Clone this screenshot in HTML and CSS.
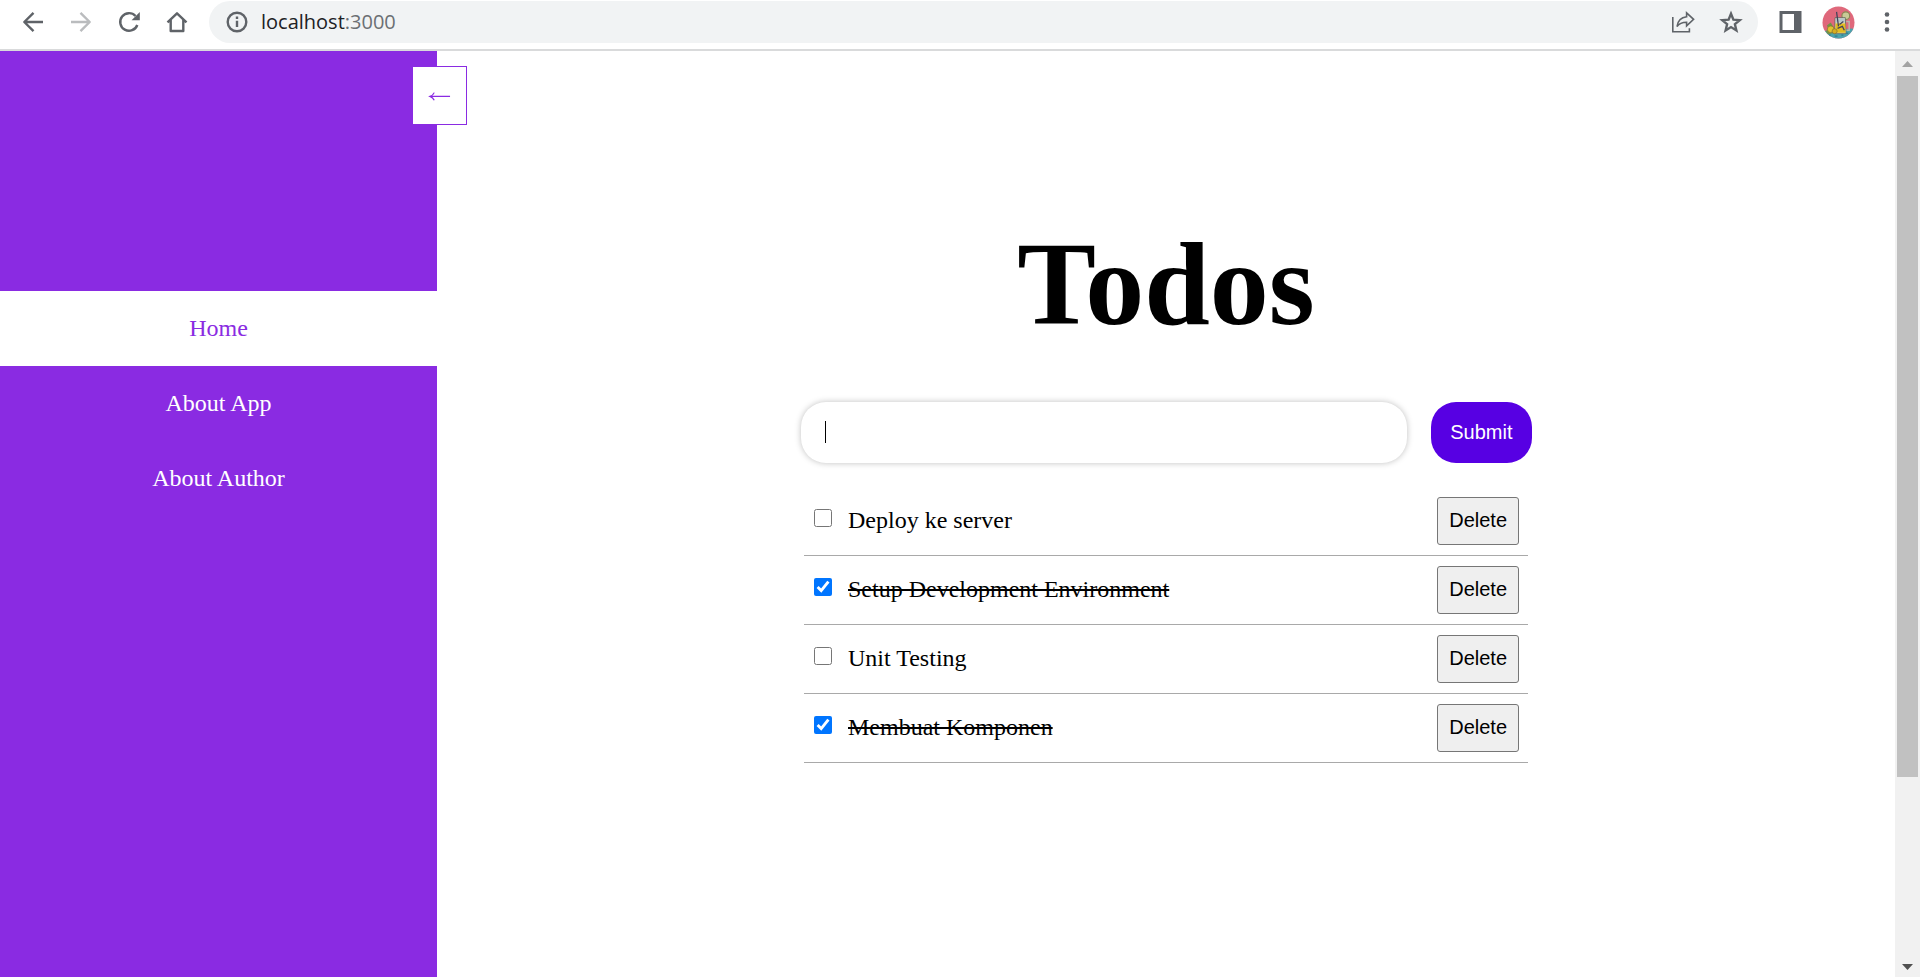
FILE: index.html
```html
<!DOCTYPE html>
<html lang="id">
<head>
<meta charset="utf-8">
<title>Todos</title>
<link rel="stylesheet" href="styles.css">
</head>
<body>
<header class="toolbar">
  <div class="nav-buttons">
    <button class="icon-btn" type="button" aria-label="Back">
      <svg viewBox="0 0 24 24" class="icon"><path d="M22 12H3.500M12.500 2.800L3.300 12l9.200 9.200" /></svg>
    </button>
    <button class="icon-btn icon-btn-dim" type="button" aria-label="Forward">
      <svg viewBox="0 0 24 24" class="icon"><path d="M2 12h18.500M11.500 2.800l9.200 9.200-9.200 9.200" /></svg>
    </button>
    <button class="icon-btn" type="button" aria-label="Reload">
      <svg viewBox="0 0 24 24" class="icon"><path d="M20.300 15A8.800 8.800 0 1 1 18.500 6" /><path class="fill" d="M22.800 2v8.200h-8.200z" /></svg>
    </button>
    <button class="icon-btn" type="button" aria-label="Home">
      <svg viewBox="0 0 24 24" class="icon"><path d="M2.500 12.300L12 3.300l9.500 9M5.700 10v11h12.600V10" /></svg>
    </button>
  </div>
  <div class="omnibox">
    <svg viewBox="0 0 24 24" class="icon icon-info"><circle cx="12" cy="12" r="9.300" /><path d="M12 10.800v6.200M12 6.600v2.300" /></svg>
    <div class="url" role="textbox" aria-label="Address">localhost<span class="url-port">:3000</span></div>
    <button class="icon-btn" type="button" aria-label="Share">
      <svg viewBox="0 0 24 24" class="icon icon-thin"><path d="M1.800 7v14.700h16.600v-3.500M15.600 2.800l7 6.500-7 6.500v-3.600c-4.600 0-7.600 1.400-9.600 4.300.7-5.200 3.600-9 9.600-9.700z" /></svg>
    </button>
    <button class="icon-btn" type="button" aria-label="Bookmark">
      <svg viewBox="0 0 24 24" class="icon"><path class="mitre" d="M12 3.700l2.400 5.900 6.400.5-4.900 4.100 1.500 6.200L12 17.100l-5.400 3.300 1.500-6.200-4.900-4.100 6.400-.5z" /></svg>
    </button>
  </div>
  <button class="icon-btn" type="button" aria-label="Side panel">
    <svg viewBox="0 0 24 24" class="icon"><path class="fill" fill-rule="evenodd" d="M1.500 1h22v22h-22zM4.500 4v16H16V4z" /></svg>
  </button>
  <button class="avatar" type="button" aria-label="Profile">
    <svg viewBox="0 0 34 34" class="avatar-art">
      <defs><clipPath id="round"><circle cx="17" cy="17" r="16.500" /></clipPath></defs>
      <g clip-path="url(#round)">
        <path fill="#df687b" d="M0 0h34v34H0z" />
        <path fill="#4aa4ae" d="M0 27q5-3 10-1t12-1 12-1v10H0z" />
        <circle cx="24.500" cy="10" r="4" fill="#c9ca96" stroke="#8b8554" stroke-width="1.200" />
        <path d="M25 16h3v9h-3" fill="none" stroke="#b9b9a8" stroke-width="1.500" />
        <path fill="#ded9b8" stroke="#59635c" stroke-width=".8" d="M13.500 12h10.500l.7 16.500H13z" />
        <path fill="#e2bc20" d="M14 18h10l.3 9.500H13.700z" />
        <path fill="#b7c6c9" d="M14 12.500h9.500V17H14z" />
        <path d="M15 6l2 15M18 19l4-3M16 23l5-2 2 4" fill="none" stroke="#41445a" stroke-width="1.300" />
        <path fill="#729548" d="M5 20l4-3 3 5-5 2zM4 26l3-3 4 5-5 1z" />
        <circle cx="9" cy="24" r="3.500" fill="#e0c22f" stroke="#806f38" stroke-width=".7" />
        <circle cx="13" cy="26" r="2.600" fill="#d6ad20" stroke="#806f38" stroke-width=".7" />
        <path d="M7 30h2M13 31h3M20 30h2M25 28h2" stroke="#296f80" />
      </g>
    </svg>
  </button>
  <button class="icon-btn" type="button" aria-label="Menu">
    <svg viewBox="0 0 24 24" class="icon"><g class="fill"><circle cx="12" cy="4.500" r="2.300" /><circle cx="12" cy="12" r="2.300" /><circle cx="12" cy="19.500" r="2.300" /></g></svg>
  </button>
</header>
<div class="page">
  <aside class="sidebar">
    <button class="toggle" type="button" aria-label="Close sidebar">
      <svg viewBox="0 0 24 27" class="toggle-arrow"><path d="M2 14.500h21M6.500 10.500q-1.200 2.800-4.500 4 3.300 1.200 4.500 4" /></svg>
    </button>
    <nav class="menu">
      <a class="menu-link menu-link-active" href="#home">Home</a>
      <a class="menu-link" href="#app">About App</a>
      <a class="menu-link" href="#author">About Author</a>
    </nav>
  </aside>
  <main class="content">
    <h1 class="title">Todos</h1>
    <form class="todo-form">
      <div class="field">
        <input class="field-input" type="text" aria-label="New todo">
        <span class="caret"></span>
      </div>
      <button class="submit" type="submit">Submit</button>
    </form>
    <ul class="todos">
      <li class="todo">
        <input class="check" type="checkbox" id="t1">
        <label class="todo-label" for="t1">Deploy ke server</label>
        <button class="delete" type="button">Delete</button>
      </li>
      <li class="todo">
        <input class="check" type="checkbox" id="t2" checked>
        <label class="todo-label" for="t2">Setup Development Environment</label>
        <button class="delete" type="button">Delete</button>
      </li>
      <li class="todo">
        <input class="check" type="checkbox" id="t3">
        <label class="todo-label" for="t3">Unit Testing</label>
        <button class="delete" type="button">Delete</button>
      </li>
      <li class="todo">
        <input class="check" type="checkbox" id="t4" checked>
        <label class="todo-label" for="t4">Membuat Komponen</label>
        <button class="delete" type="button">Delete</button>
      </li>
    </ul>
  </main>
  <div class="scrollbar" aria-hidden="true">
    <svg class="scroll-arrow scroll-arrow-off" viewBox="0 0 25 25"><path d="M7 16h11l-5.500-6z" /></svg>
    <div class="track"><div class="thumb"></div></div>
    <svg class="scroll-arrow" viewBox="0 0 25 25"><path d="M7 12h11l-5.500 6z" /></svg>
  </div>
</div>
</body>
</html>
```
FILE: styles.css
```css
* {
  box-sizing: border-box;
}

body {
  margin: 0;
  min-height: 100vh;
  display: flex;
  flex-direction: column;
  background: #fff;
  color: #000;
  font-family: "Liberation Serif", "Times New Roman", serif;
  font-size: 24px;
}

button {
  font: inherit;
  cursor: pointer;
}

/* Browser toolbar */
.toolbar {
  display: flex;
  align-items: center;
  gap: 20px;
  padding: 1px 21px 6px;
  border-bottom: 2px solid #d9dadb;
}

.nav-buttons {
  display: flex;
  gap: 24px;
}

.icon-btn {
  display: flex;
  padding: 0;
  border: 0;
  background: none;
  color: #5f6368;
}

.icon-btn-dim {
  color: #babcbe;
}

.icon {
  width: 24px;
  height: 24px;
  flex: none;
  fill: none;
  stroke: currentColor;
  stroke-width: 2.4;
  stroke-linejoin: round;
}

.icon .fill {
  fill: currentColor;
  stroke: none;
}

.icon .mitre {
  stroke-linejoin: miter;
}

.icon-thin {
  stroke-width: 1.6;
  stroke-linejoin: miter;
}

.icon-info {
  color: #5f6368;
}

.omnibox {
  flex: 1;
  display: flex;
  align-items: center;
  gap: 24px;
  height: 42px;
  padding: 0 15px 0 16px;
  border-radius: 21px;
  background: #f1f3f4;
}

.url {
  flex: 1;
  margin-left: -12px;
  color: #202124;
  font-family: "Open Sans", "Noto Sans", sans-serif;
  font-size: 20px;
  line-height: 28px;
}

.url-port {
  color: #6b6f73;
}

.avatar {
  display: flex;
  padding: 0;
  border: 0;
  background: none;
}

.avatar-art {
  width: 33px;
  height: 33px;
}

/* Page */
.page {
  flex: 1;
  display: flex;
}

.sidebar {
  position: relative;
  flex: 0 0 437px;
  padding-top: 240px;
  background: #8a2be2;
}

.toggle {
  position: absolute;
  top: 15px;
  right: -30px;
  display: flex;
  padding: 15px;
  border: 1px solid #8a2be2;
  background: #fff;
  color: #8a2be2;
}

.toggle-arrow {
  width: 23px;
  height: 27px;
  fill: none;
  stroke: currentColor;
  stroke-width: 1.3;
}

.menu {
  display: flex;
  flex-direction: column;
}

.menu-link {
  padding: 24px;
  color: #fff;
  line-height: 27px;
  text-align: center;
  text-decoration: none;
}

.menu-link-active {
  background: #fff;
  color: #8a2be2;
}

.content {
  flex: 1;
  display: flex;
  flex-direction: column;
  align-items: center;
  padding-top: 167px;
}

.title {
  margin: 0 0 50px;
  font-size: 118px;
  line-height: 134px;
}

.todo-form {
  display: flex;
  gap: 24px;
  width: 100%;
  max-width: 731px;
  margin-bottom: 24px;
}

.field {
  position: relative;
  flex: 1;
}

.field-input {
  width: 100%;
  height: 61px;
  padding: 0 24px;
  border: 0;
  border-radius: 25px;
  outline: 0;
  box-shadow: 0 0 6px rgba(0, 0, 0, 0.25);
  font: 20px "Liberation Sans", Arial, sans-serif;
}

.caret {
  position: absolute;
  top: 19px;
  left: 24px;
  width: 1px;
  height: 22px;
  background: #000;
}

.submit {
  padding: 0 19px;
  border: 0;
  border-radius: 25px;
  background: #5700e3;
  color: #fff;
  font: 20px "Liberation Sans", Arial, sans-serif;
}

.todos {
  width: 100%;
  max-width: 724px;
  margin: 0;
  padding: 0;
  list-style: none;
}

.todo {
  display: flex;
  align-items: center;
  gap: 16px;
  padding: 10px 9px 10px 10px;
  border-bottom: 1px solid #a9a9a9;
}

.check {
  width: 18px;
  height: 18px;
  margin: 0 0 6px;
}

.todo-label {
  flex: 1;
  padding-bottom: 2px;
  line-height: 28px;
}

.check:checked + .todo-label {
  text-decoration: line-through;
}

.delete {
  height: 48px;
  padding: 0 11px 2px;
  border: 1px solid #767676;
  border-radius: 3px;
  background: #efefef;
  color: #000;
  font: 20px "Liberation Sans", Arial, sans-serif;
}

/* Scrollbar */
.scrollbar {
  display: flex;
  flex-direction: column;
  flex: 0 0 25px;
  background: #f1f1f1;
}

.scroll-arrow {
  width: 25px;
  height: 25px;
  fill: #505050;
}

.scroll-arrow-off {
  fill: #a3a3a3;
}

.track {
  flex: 1;
  padding: 0 2px;
}

.thumb {
  height: 80%;
  background: #c1c1c1;
}
```
